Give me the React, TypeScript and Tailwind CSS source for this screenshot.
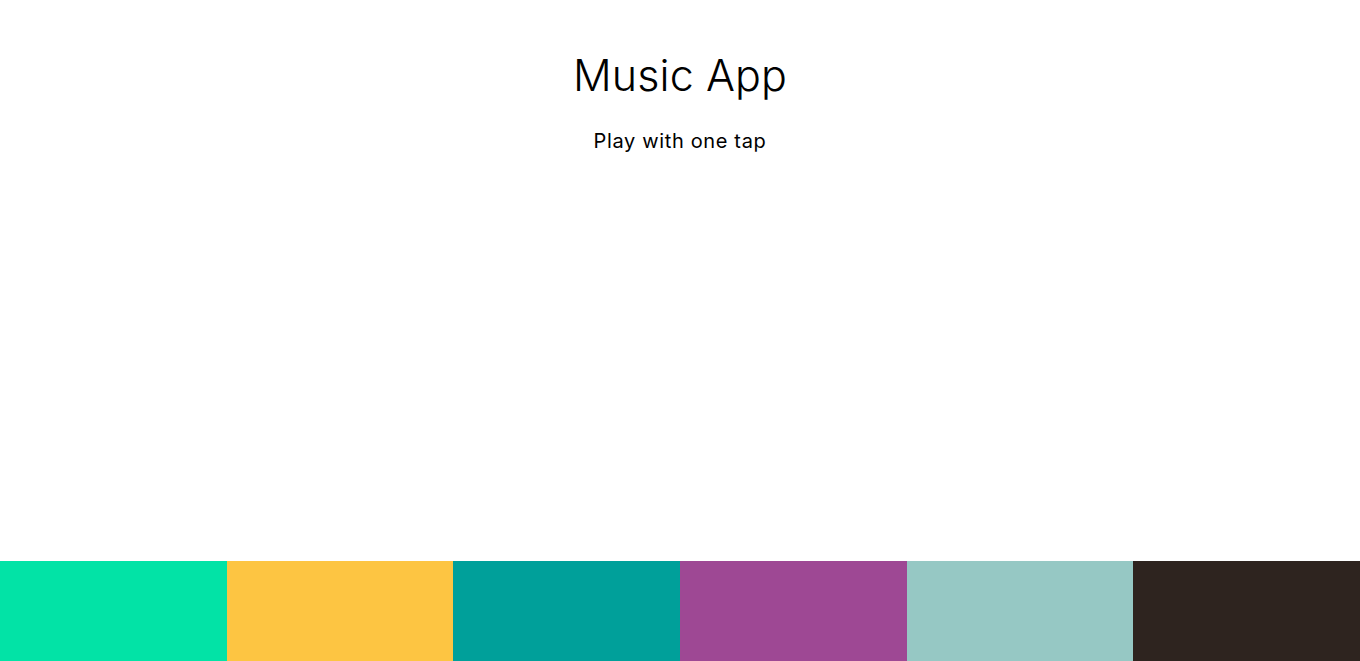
const pads = ["bg-[#02e3a6]", "bg-[#fdc542]", "bg-[#00a09a]", "bg-[#9e4894]", "bg-[#96c8c4]", "bg-[#2e241f]"];

const App = () => {
  return (
    <div className="h-screen flex flex-col justify-between bg-white font-['Inter',sans-serif] text-black">
      <header className="flex flex-col items-center pt-[46px]">
        <h1 className="text-[43px] font-light leading-[58px] tracking-[0.1px]">Music App</h1>
        <p className="mt-[24px] text-[20px] leading-[26px] tracking-[0.65px]">Play with one tap</p>
      </header>

      {/* Pads */}
      <div className="flex h-[100px]">
        {pads.map((pad) => (
          <div key={pad} className={`flex-1 ${pad}`}></div>
        ))}
      </div>
    </div>
  );
};

export default App;
